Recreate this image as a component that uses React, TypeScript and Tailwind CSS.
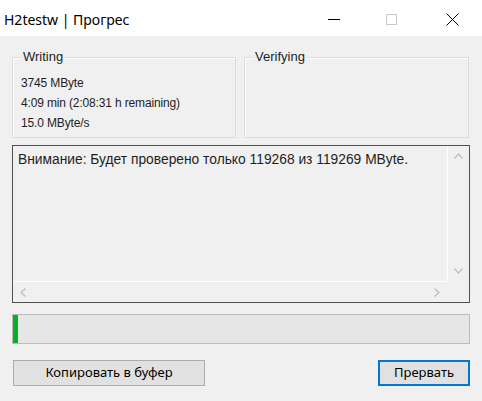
import React from "react";

const body = { fontFamily: '"Liberation Sans", Arial, sans-serif' };
const ui = { fontFamily: '"Noto Sans", "Open Sans", sans-serif' };

function GroupBox({ title, children, className }: { title: string; children?: React.ReactNode; className?: string }) {
  return (
    <div className={"border border-[#dcdcdc] shadow-[inset_1px_1px_0_#ffffff] h-[81px] " + (className ?? "")}>
      <div className="-mt-[9px] ml-[8px] px-[2px] w-fit bg-[#f0f0f0] text-[13px] leading-[16px] text-[#1e1e1e]">{title}</div>
      {children}
    </div>
  );
}

export default function App() {
  return (
    <div className="w-[482px] h-[401px] bg-[#f0f0f0] flex flex-col overflow-hidden" style={body}>
      {/* title bar */}
      <div className="h-[36px] bg-white flex items-center shrink-0 pt-[3px] pr-[7px]">
        <div className="pl-[4px] text-[14px] text-black flex-1" style={ui}>H2testw | Прогрес</div>
        <div className="w-[46px] h-[33px] flex items-center justify-center mr-[11px]">
          <div className="w-[12px] h-[1px] bg-black" />
        </div>
        <div className="w-[46px] h-[33px] flex items-center justify-center mr-[15px]">
          <div className="w-[11px] h-[11px] border border-[#c8c8c8]" />
        </div>
        <div className="w-[46px] h-[33px] flex items-center justify-center">
          <svg width="13" height="13" viewBox="0 0 13 13">
            <path d="M0.5 0.5 L12.5 12.5 M12.5 0.5 L0.5 12.5" stroke="#000" strokeWidth="1" />
          </svg>
        </div>
      </div>

      <div className="px-[12px] pt-[21px] flex flex-col">
        {/* group boxes */}
        <div className="flex gap-[8px] pr-[1px]">
          <GroupBox title="Writing" className="w-[224px]">
            <div className="pl-[8px] pt-[8px] text-[12px] leading-[20px] text-[#1e1e1e] tracking-[-0.15px]">
              <div>3745 MByte</div>
              <div>4:09 min (2:08:31 h remaining)</div>
              <div>15.0 MByte/s</div>
            </div>
          </GroupBox>
          <GroupBox title="Verifying" className="flex-1" />
        </div>

        {/* text area */}
        <div className="mt-[7px] h-[158px] border border-[#505050] flex flex-col">
          <div className="flex flex-1 min-h-0">
            <div className="flex-1 pl-[5px] pt-[4px] text-[13.8px] leading-[20px] text-[#1e1e1e]">
              Внимание: Будет проверено только 119268 из 119269 MByte.
            </div>
            <div className="w-[22px] border-l border-white flex flex-col items-center justify-between py-[7px]">
              <svg width="9" height="6" viewBox="0 0 9 6"><path d="M0.5 5.5 L4.5 1 L8.5 5.5" fill="none" stroke="#c2c2c2" strokeWidth="1.5" /></svg>
              <svg width="9" height="6" viewBox="0 0 9 6"><path d="M0.5 0.5 L4.5 5 L8.5 0.5" fill="none" stroke="#c2c2c2" strokeWidth="1.5" /></svg>
            </div>
          </div>
          <div className="h-[21px] flex">
            <div className="flex-1 border-t border-white flex items-center justify-between px-[7px]">
              <svg width="6" height="9" viewBox="0 0 6 9"><path d="M5.5 0.5 L1 4.5 L5.5 8.5" fill="none" stroke="#c2c2c2" strokeWidth="1.5" /></svg>
              <svg width="6" height="9" viewBox="0 0 6 9"><path d="M0.5 0.5 L5 4.5 L0.5 8.5" fill="none" stroke="#c2c2c2" strokeWidth="1.5" /></svg>
            </div>
            <div className="w-[22px]" />
          </div>
        </div>

        {/* progress */}
        <div className="mt-[11px] h-[30px] border border-[#bcbcbc] bg-[#e6e6e6] flex">
          <div className="w-[5px] bg-[#06b025]" />
        </div>

        {/* buttons */}
        <div className="mt-[16px] flex justify-between pl-[1px]">
          <button className="w-[192px] h-[26px] border border-[#adadad] bg-[#e1e1e1] text-[13px] text-black" style={ui}>
            Копировать в буфер
          </button>
          <button className="w-[92px] h-[26px] border-2 border-[#0078d7] bg-[#e1e1e1] text-[13px] text-black" style={ui}>
            Прервать
          </button>
        </div>
      </div>
    </div>
  );
}
